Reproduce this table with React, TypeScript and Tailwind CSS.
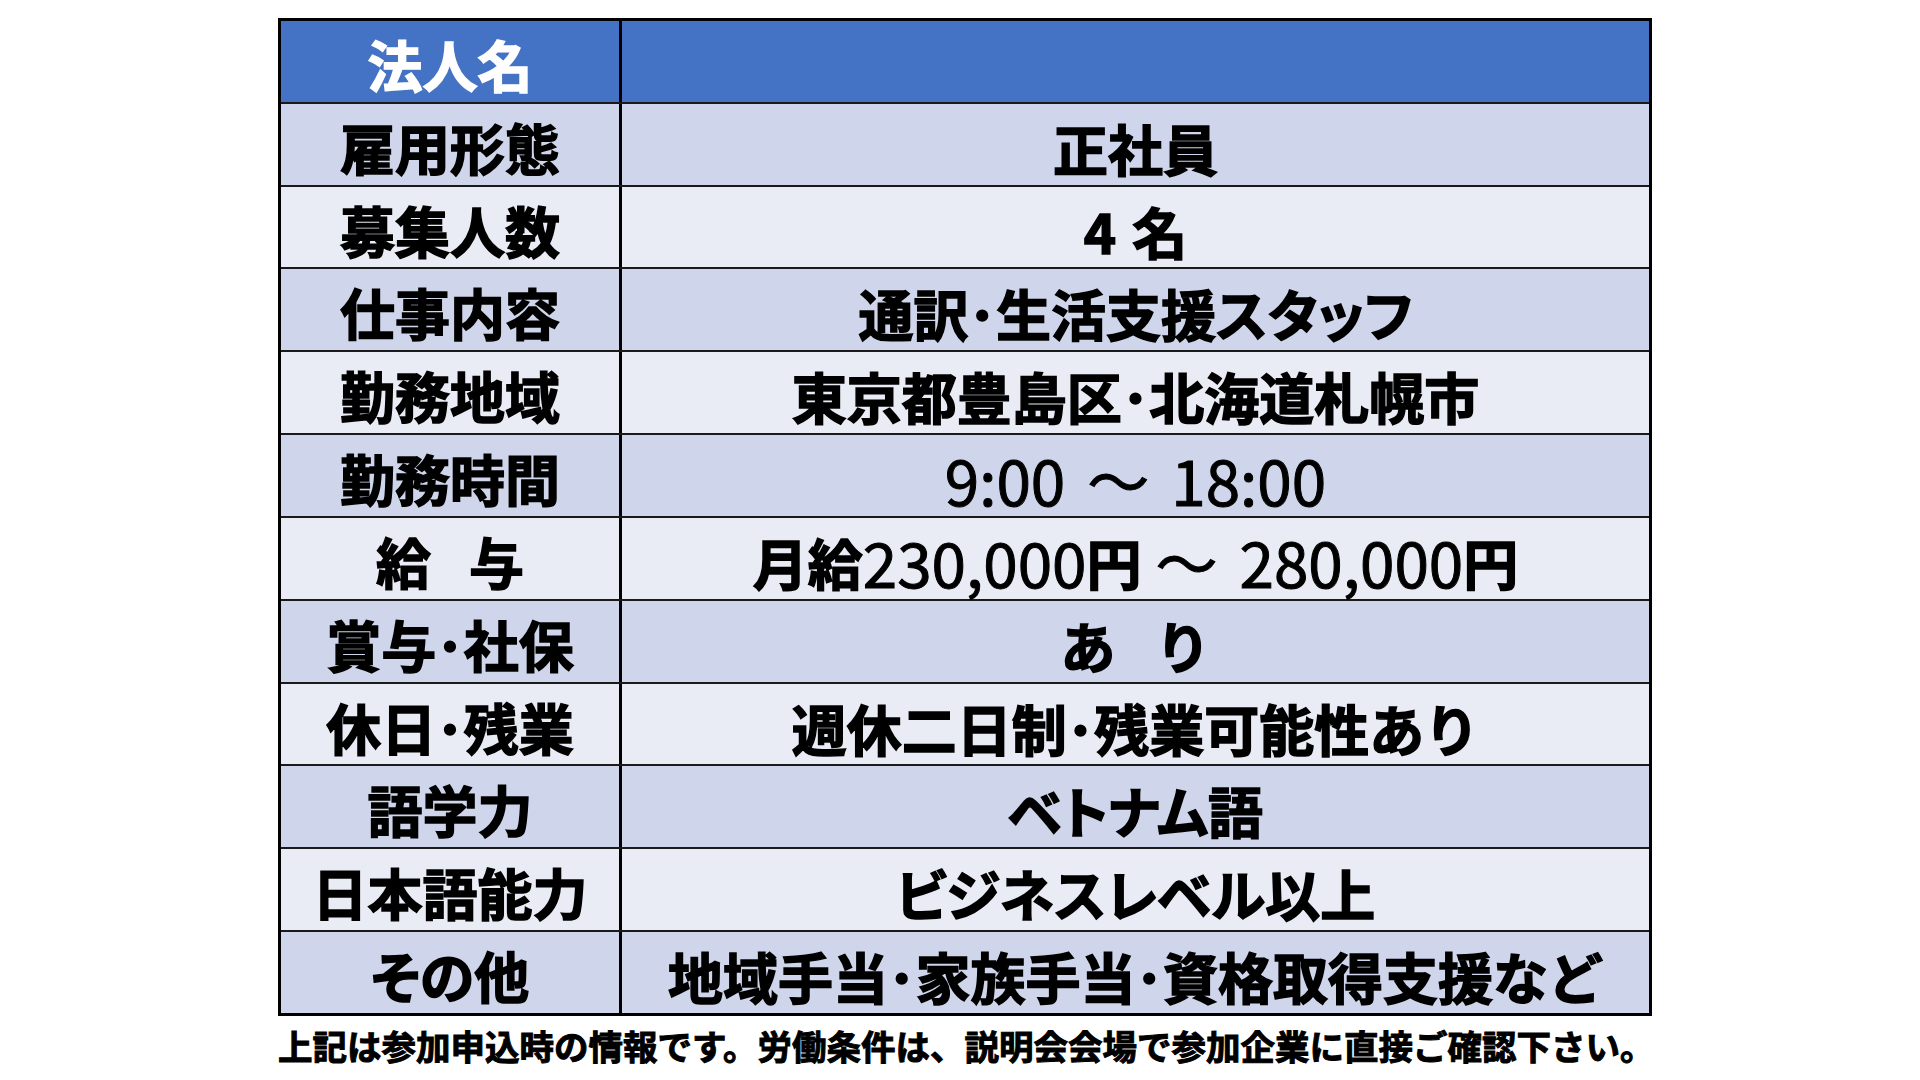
import * as React from 'react';

type Row = { label: React.ReactNode; value: React.ReactNode };

// 中黒は半角幅で表示
const withDots = (s: string) => s.replace(/・/g, '･');

const Num: React.FC<{ children: React.ReactNode }> = ({ children }) => (
  <span className="font-normal text-[62px] [-webkit-text-stroke:1px_black]">{children}</span>
);

const palt = "[font-feature-settings:'palt']";

const rows: Row[] = [
  { label: '雇用形態', value: '正社員' },
  {
    label: '募集人数',
    value: (
      <>
        4<span className="inline-block w-[16px]" />名
      </>
    ),
  },
  { label: '仕事内容', value: <span className={palt}>{withDots('通訳・生活支援スタッフ')}</span> },
  { label: '勤務地域', value: withDots('東京都豊島区・北海道札幌市') },
  {
    label: '勤務時間',
    value: (
      <Num>
        9:00<span className="inline-block w-[22px]" />～<span className="inline-block w-[22px]" />18:00
      </Num>
    ),
  },
  {
    label: (
      <>
        給<span className="inline-block w-[38px]" />与
      </>
    ),
    value: (
      <>
        月給<Num>230,000</Num>円<Num><span className="inline-block w-[14px]" />～<span className="inline-block w-[22px]" />280,000</Num>円
      </>
    ),
  },
  { label: withDots('賞与・社保'), value: <>あ<span className="inline-block w-[40px]" />り</> },
  { label: withDots('休日・残業'), value: withDots('週休二日制・残業可能性あり') },
  { label: '語学力', value: <span className={palt}>ベトナム語</span> },
  { label: '日本語能力', value: <span className={palt}>ビジネスレベル以上</span> },
  { label: <span className={palt}>その他</span>, value: withDots('地域手当・家族手当・資格取得支援など') },
];

export default function App() {
  return (
    <div className="w-[1920px] h-[1080px] bg-white font-['Noto_Sans_CJK_JP','Noto_Sans',sans-serif] text-black">
      <div className="ml-[278px] pt-[18px] w-[1374px]">
        {/* Table */}
        <div className="h-[998px] border-[3px] border-black flex flex-col">
          {/* Header row */}
          <div className="flex-1 flex bg-[#4472c4] border-b-2 border-[#1a1a1a]">
            <div className="w-[341px] border-r-[3px] border-black flex items-center justify-center pt-[4px] text-white text-[55px] font-bold leading-none [-webkit-text-stroke:1.5px_white]">
              法人名
            </div>
            <div className="flex-1" />
          </div>

          {rows.map((r, i) => (
            <div
              key={i}
              className={
                'flex-1 flex ' +
                (i % 2 === 0 ? 'bg-[#cfd5ea]' : 'bg-[#e9ebf5]') +
                (i < rows.length - 1 ? ' border-b-2 border-[#1a1a1a]' : '')
              }
            >
              <div className="w-[341px] border-r-[3px] border-black flex items-center justify-center pt-[4px] text-[55px] font-bold leading-none whitespace-pre [-webkit-text-stroke:1.5px_black]">
                {r.label}
              </div>
              <div className="flex-1 flex items-center justify-center pt-[6px] text-[55px] font-bold leading-none whitespace-pre [-webkit-text-stroke:1.5px_black]">
                {r.value}
              </div>
            </div>
          ))}
        </div>

        {/* Footnote */}
        <p className="mt-[12px] text-[34.5px] font-bold leading-none whitespace-nowrap [-webkit-text-stroke:1px_black]">
          上記は参加申込時の情報です。労働条件は、説明会会場で参加企業に直接ご確認下さい。
        </p>
      </div>
    </div>
  );
}
